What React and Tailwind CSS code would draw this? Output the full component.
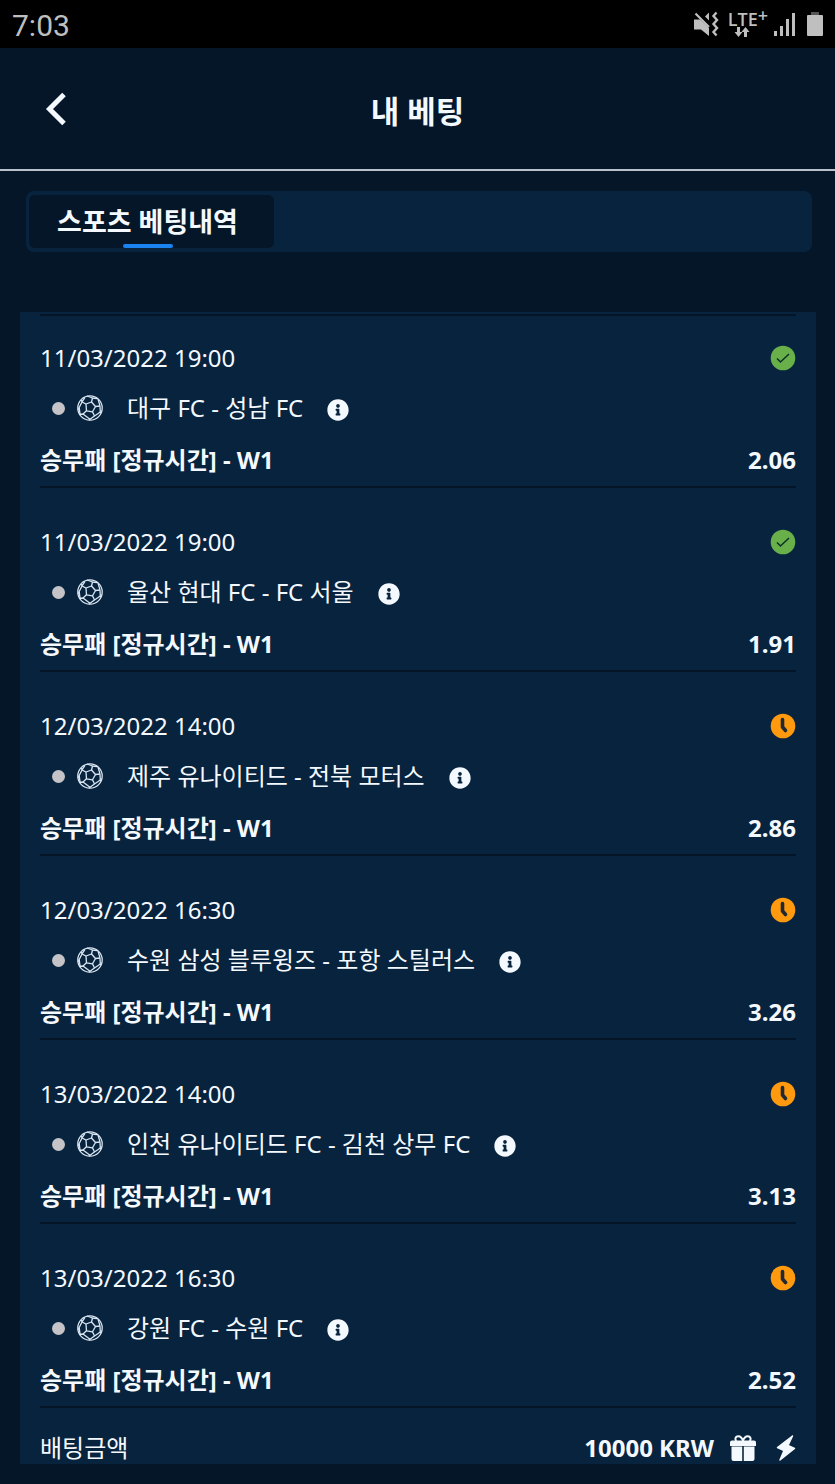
import { FaInfoCircle } from 'react-icons/fa'

const BETS = [
  { id: 1, date: '11/03/2022 19:00', match: '대구 FC - 성남 FC', odds: '2.06', status: 'won' },
  { id: 2, date: '11/03/2022 19:00', match: '울산 현대 FC - FC 서울', odds: '1.91', status: 'won' },
  { id: 3, date: '12/03/2022 14:00', match: '제주 유나이티드 - 전북 모터스', odds: '2.86', status: 'pending' },
  { id: 4, date: '12/03/2022 16:30', match: '수원 삼성 블루윙즈 - 포항 스틸러스', odds: '3.26', status: 'pending' },
  { id: 5, date: '13/03/2022 14:00', match: '인천 유나이티드 FC - 김천 상무 FC', odds: '3.13', status: 'pending' },
  { id: 6, date: '13/03/2022 16:30', match: '강원 FC - 수원 FC', odds: '2.52', status: 'pending' },
]

function MutedIcon() {
  return (
    <svg viewBox="0 0 26 26" className="h-[26px] w-[26px]" fill="currentColor">
      <path d="M0 8.500h6L15 17v8l-8-6.500H0z" />
      <path d="M15 1.500v8L11 5.500z" />
      <path d="M1.500 2.500L15 16" fill="none" stroke="currentColor" strokeWidth="2.200" />
      <path
        d="M22.500 1.500L19.500 5l3.500 4-3.500 4 3.500 4-3.500 4 3 3.500"
        fill="none"
        stroke="currentColor"
        strokeWidth="2.400"
      />
    </svg>
  )
}

function DataArrows() {
  return (
    <svg viewBox="0 0 16 10" className="h-[10px] w-4" fill="currentColor">
      <path d="M3 0h3v5h2.500L4.500 10 .5 5H3z" />
      <path d="M10 10h3V5h2.500l-4-5-4 5H10z" />
    </svg>
  )
}

function SignalIcon() {
  return (
    <svg viewBox="0 0 22 24" className="h-6 w-[22px]" fill="currentColor">
      <rect x="0" y="19" width="3" height="5" />
      <rect x="6" y="14" width="3" height="10" />
      <rect x="12" y="7" width="3" height="17" />
      <rect x="18" y="1" width="3" height="23" />
    </svg>
  )
}

function BatteryIcon() {
  return (
    <svg viewBox="0 0 18 26" className="h-[26px] w-[18px]">
      <rect x="5" y="1" width="8" height="4" fill="#555" />
      <rect x="1" y="4" width="16" height="21" rx="1" fill="currentColor" />
    </svg>
  )
}

function BallIcon() {
  return (
    <svg
      viewBox="0 0 26 26"
      className="size-[26px] shrink-0 text-[#d9e6f2]"
      fill="none"
      stroke="currentColor"
      strokeWidth="1.300"
      strokeLinejoin="round"
    >
      <circle cx="13" cy="13" r="12.200" />
      <path d="M9 9l5.500-2 4 4.500-3 5.300-6-1z" />
      <path d="M9 9L5 7M14.500 7L15.500 3M18.500 11.500l4.500-.5M15.500 16.800l2 4.200M9.500 15.800L6 19" />
      <path d="M5 7l3-4.700M5 7l-2.800 5.500L.9 15M5 7l-.5-2" />
      <path d="M15.500 3L10 1M15.500 3l4.700.7" />
      <path d="M23 11l-2-7M23 11l.3 6 .8 1" />
      <path d="M17.500 21l5.800-4M17.500 21l-4.500 3.200-1 1" />
      <path d="M6 19l-3.600.5M6 19l7 5.200M2.200 12.500L3 19" />
    </svg>
  )
}

function WonIcon() {
  return (
    <svg viewBox="0 0 26 26" className="size-[26px]" role="img" aria-label="적중">
      <circle cx="13" cy="13" r="12.300" fill="#6ab04a" />
      <path d="M7 13.500l3.500 3.500 8.500-8" fill="none" stroke="#0b3328" strokeWidth="1.600" />
    </svg>
  )
}

function PendingIcon() {
  return (
    <svg viewBox="0 0 26 26" className="size-[26px]" role="img" aria-label="대기중">
      <circle cx="13" cy="13" r="12.300" fill="#ff9a0e" />
      <path
        d="M12.500 6.500v7.500l3 3.500"
        fill="none"
        stroke="#1f2a30"
        strokeWidth="3.600"
        strokeLinecap="round"
        strokeLinejoin="round"
      />
    </svg>
  )
}

function GiftIcon() {
  return (
    <svg viewBox="0 0 26 26" className="size-[26px]" fill="currentColor">
      <path
        d="M13 5.500C11.500 2 9 .8 7 1.500 4.800 2.400 5 5 6.500 6M13 5.500c1.500-3.500 4-4.700 6-4 2.200.9 2 3.500.5 4.500"
        fill="none"
        stroke="currentColor"
        strokeWidth="2"
      />
      <path d="M2 5.500h22a2 2 0 0 1 2 2V11H0V7.500a2 2 0 0 1 2-2z" />
      <path d="M1.500 11.500h10.700V26H3.500a2 2 0 0 1-2-2zM13.800 11.500h10.700V24a2 2 0 0 1-2 2h-8.700z" />
    </svg>
  )
}

function BoltIcon() {
  return (
    <svg viewBox="0 0 20 26" className="h-[26px] w-5" fill="currentColor">
      <path
        d="M16.500 1L1.500 12.500l6.500 3L4 25l14.500-11.500-6.500-3z"
        stroke="currentColor"
        strokeWidth="1.500"
        strokeLinejoin="round"
      />
    </svg>
  )
}

function StatusBar() {
  return (
    <div className="flex h-12 items-center justify-between bg-black pl-3 pr-[11px] text-[#bfbfbf]">
      <span className="pt-1 font-['Roboto',sans-serif] text-[30px] leading-9">7:03</span>
      <div className="flex items-center">
        <MutedIcon />
        <div className="ml-2 flex flex-col items-center">
          <span className="flex font-['Open_Sans',sans-serif] text-[18px] font-semibold leading-4">
            LTE<sup className="top-0 text-lg leading-[8px]">+</sup>
          </span>
          <span className="-ml-3">
            <DataArrows />
          </span>
        </div>
        <span className="ml-1.5">
          <SignalIcon />
        </span>
        <span className="ml-2.5">
          <BatteryIcon />
        </span>
      </div>
    </div>
  )
}

function BetRow({ bet, first }) {
  return (
    <li className={`border-b-2 border-[#041527] pb-2 ${first ? 'pt-6' : 'pt-9'}`}>
      <div className="flex items-center justify-between">
        <time>{bet.date}</time>
        {bet.status === 'won' ? <WonIcon /> : <PendingIcon />}
      </div>
      <div className="mt-3.5 flex items-center pl-3">
        <span className="size-[13px] shrink-0 rounded-full bg-[#c4c4c8]" />
        <span className="ml-3">
          <BallIcon />
        </span>
        <span className="ml-6">{bet.match}</span>
        <button type="button" aria-label="경기 정보" className="ml-6 pt-1">
          <FaInfoCircle className="size-[22px]" />
        </button>
      </div>
      <div className="mt-4 flex items-center justify-between font-bold">
        <span>승무패 [정규시간] - W1</span>
        <span>{bet.odds}</span>
      </div>
    </li>
  )
}

export default function App() {
  return (
    <div className="min-h-screen bg-[#051628] pb-[19px] font-['Noto_Sans','Noto_Sans_CJK_KR',sans-serif] text-2xl leading-9 text-[#f4f9ff]">
      <StatusBar />

      <header className="grid h-[123px] grid-cols-[96px_1fr_96px] items-center border-b-2 border-[#b9c2cc]">
        <button type="button" aria-label="뒤로" className="flex h-16 items-center pl-[45px]">
          <svg viewBox="0 0 22 34" className="h-[34px] w-[22px]" fill="none" stroke="currentColor" strokeWidth="5">
            <path d="M19 2.500L4.500 17 19 31.500" />
          </svg>
        </button>
        <h1 className="pt-1 text-center text-[31px] font-bold">내 베팅</h1>
      </header>

      {/* 탭 */}
      <nav className="ml-[26px] mr-[23px] mt-5 flex rounded-lg bg-[#08233d] px-[3px] py-1">
        <button
          type="button"
          className="flex h-[53px] w-[245px] flex-col items-center justify-end rounded-md bg-[#051628] pr-2 text-[27px] font-bold"
        >
          <span className="leading-10">스포츠 베팅내역</span>
          <span className="mt-0.5 h-1 w-[50px] rounded-xs bg-[#1a83f0]" />
        </button>
      </nav>

      {/* 베팅 목록 */}
      <main className="ml-5 mr-[19px] mt-[60px] bg-[#08233d] px-5 pt-0.5">
        <ul className="border-t-2 border-[#041527]">
          {BETS.map((bet, i) => (
            <BetRow key={bet.id} bet={bet} first={i === 0} />
          ))}
        </ul>
        <div className="flex items-center justify-between pt-6 leading-8">
          <span>배팅금액</span>
          <div className="flex items-center font-bold">
            <span>10000 KRW</span>
            <span className="ml-4">
              <GiftIcon />
            </span>
            <span className="ml-5">
              <BoltIcon />
            </span>
          </div>
        </div>
      </main>
    </div>
  )
}
